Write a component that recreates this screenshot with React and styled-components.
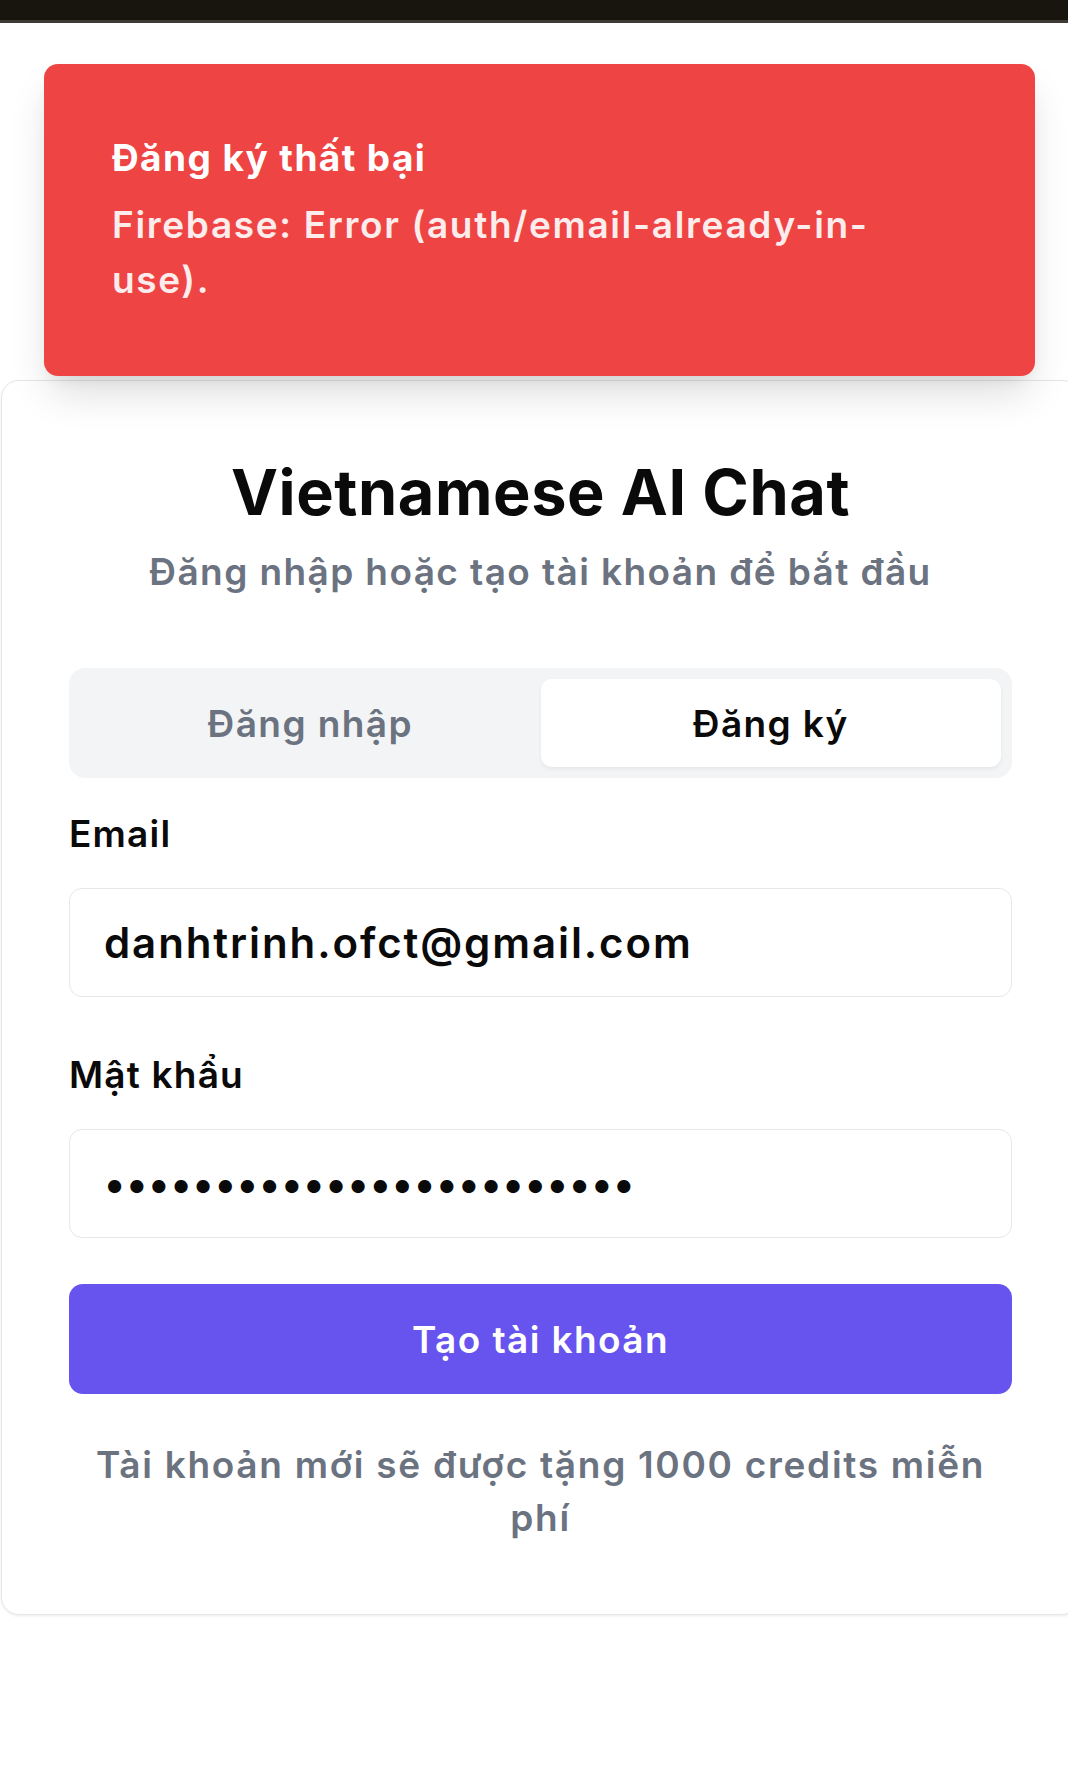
import React from "react";
import styled, { createGlobalStyle } from "styled-components";

const GlobalStyle = createGlobalStyle`
	html, body {
		margin: 0;
		padding: 0;
		background: #ffffff;
		overflow-x: hidden;
	}
	body {
		font-family: Inter, "Noto Sans", "Liberation Sans", sans-serif;
		color: #0a0a0a;
	}
	* {
		box-sizing: border-box;
	}
`;

const Page = styled.div`
	position: relative;
	min-height: 1785px;
	width: 1068px;
	overflow: hidden;
`;

const StatusBar = styled.div`
	height: 23px;
	background: #18150f;
	border-bottom: 3px solid #3d3b33;
`;

const Main = styled.main`
	padding: 357px 0 120px 1px;
`;

const Toast = styled.div`
	position: absolute;
	top: 64px;
	left: 44px;
	width: 991px;
	height: 312px;
	padding: 69px 130px 0 68px;
	background: #ef4444;
	border-radius: 14px;
	color: #ffffff;
	letter-spacing: 1.4px;
	box-shadow: 0 22px 40px -6px rgba(0, 0, 0, 0.14), 0 8px 16px -8px rgba(0, 0, 0, 0.1);
	z-index: 10;
`;

const ToastTitle = styled.div`
	font-size: 37px;
	line-height: 50px;
	font-weight: 700;
`;

const ToastText = styled.div`
	margin-top: 14px;
	font-size: 37px;
	line-height: 55px;
	font-weight: 600;
	letter-spacing: 1.65px;
	opacity: 0.9;
`;

const Card = styled.section`
	width: 1079px;
	padding: 80px 67px 70px 67px;
	background: #ffffff;
	border: 1.5px solid #e5e7eb;
	border-radius: 18px;
	box-shadow: 0 1px 3px rgba(0, 0, 0, 0.08);
`;

const Header = styled.header`
	display: flex;
	flex-direction: column;
	align-items: center;
	gap: 23px;
	margin-bottom: 71px;
`;

const Title = styled.h1`
	margin: 0;
	font-size: 63px;
	line-height: 63px;
	font-weight: 700;
	letter-spacing: 0.6px;
	color: #0a0a0a;
`;

const Subtitle = styled.p`
	margin: 0;
	font-size: 37px;
	line-height: 50px;
	font-weight: 600;
	letter-spacing: 1.4px;
	color: #6b7280;
`;

const TabList = styled.div`
	display: grid;
	grid-template-columns: 1fr 1fr;
	height: 110px;
	padding: 11px;
	background: #f3f4f6;
	border-radius: 16px;
`;

const Tab = styled.button`
	border: none;
	border-radius: 11px;
	font-family: inherit;
	font-size: 37px;
	font-weight: 600;
	letter-spacing: 1.4px;
	background: ${({ active }) => (active ? "#ffffff" : "transparent")};
	color: ${({ active }) => (active ? "#0a0a0a" : "#6b7280")};
	box-shadow: ${({ active }) => (active ? "0 2px 4px rgba(0, 0, 0, 0.06)" : "none")};
	cursor: pointer;
`;

const Form = styled.form`
	display: flex;
	flex-direction: column;
	margin-top: 30px;
`;

const Field = styled.div`
	display: flex;
	flex-direction: column;
	gap: 28px;
	margin-bottom: ${({ last }) => (last ? "46px" : "52px")};
`;

const Label = styled.label`
	font-size: 37px;
	line-height: 52px;
	font-weight: 600;
	letter-spacing: 1.2px;
	color: #0a0a0a;
`;

const Input = styled.input`
	height: 109px;
	padding: 0 34px;
	border: 1.5px solid #e5e7eb;
	border-radius: 13px;
	font-family: inherit;
	font-size: 42px;
	font-weight: 600;
	letter-spacing: ${({ secret }) => (secret ? "1px" : "1.9px")};
	color: #0a0a0a;
	background: #ffffff;
	outline: none;
`;

const SubmitButton = styled.button`
	height: 110px;
	border: none;
	border-radius: 14px;
	background: #6753ee;
	color: #ffffff;
	font-family: inherit;
	font-size: 37px;
	font-weight: 600;
	letter-spacing: 1.4px;
	cursor: pointer;
`;

const Note = styled.p`
	margin: 44px 0 0;
	padding: 0 22px;
	text-align: center;
	font-size: 37px;
	line-height: 53px;
	font-weight: 600;
	letter-spacing: 1.7px;
	color: #6b7280;
`;

const App = () => {
	return (
		<Page>
			<GlobalStyle />
			<StatusBar />
			<Toast role="status">
				<ToastTitle>Đăng ký thất bại</ToastTitle>
				<ToastText>Firebase: Error (auth/email-already-in-use).</ToastText>
			</Toast>
			<Main>
				<Card>
					<Header>
						<Title>Vietnamese AI Chat</Title>
						<Subtitle>Đăng nhập hoặc tạo tài khoản để bắt đầu</Subtitle>
					</Header>
					<TabList>
						<Tab type="button">Đăng nhập</Tab>
						<Tab type="button" active>
							Đăng ký
						</Tab>
					</TabList>
					<Form onSubmit={(e) => e.preventDefault()}>
						<Field>
							<Label htmlFor="email">Email</Label>
							<Input id="email" type="email" defaultValue="danhtrinh.ofct@gmail.com" />
						</Field>
						<Field last>
							<Label htmlFor="password">Mật khẩu</Label>
							<Input id="password" type="password" secret defaultValue="danhtrinh.ofct@gmail.com" />
						</Field>
						<SubmitButton type="submit">Tạo tài khoản</SubmitButton>
					</Form>
					<Note>Tài khoản mới sẽ được tặng 1000 credits miễn phí</Note>
				</Card>
			</Main>
		</Page>
	);
};

export default App;
